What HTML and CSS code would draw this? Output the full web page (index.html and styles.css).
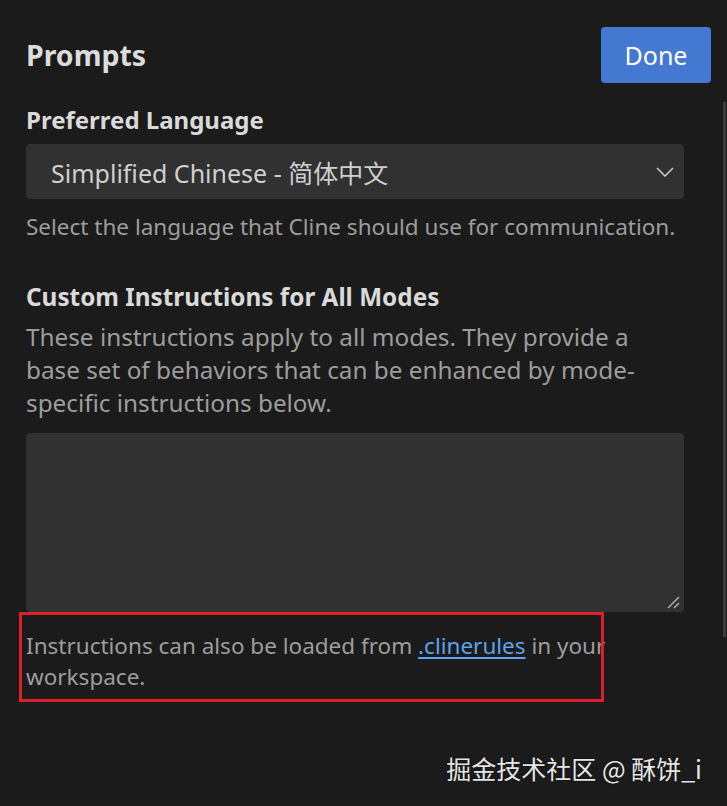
FILE: index.html
```html
<!DOCTYPE html>
<html lang="en">
<head>
<meta charset="utf-8">
<title>Prompts</title>
<link rel="stylesheet" href="styles.css">
</head>
<body>
<div class="page">
  <header class="header">
    <h1 class="title">Prompts</h1>
    <button class="done">Done</button>
  </header>

  <section class="section">
    <h2 class="label">Preferred Language</h2>
    <div class="select">
      <span class="select-text">Simplified Chinese - 简体中文</span>
      <svg class="chevron" width="18" height="10" viewBox="0 0 18 10"><polyline points="1,1 9,9 17,1" fill="none" stroke="#c8c8c8" stroke-width="1.6"/></svg>
    </div>
    <p class="desc">Select the language that Cline should use for communication.</p>
  </section>

  <section class="section">
    <h2 class="label label-custom">Custom Instructions for All Modes</h2>
    <p class="desc desc-para">These instructions apply to all modes. They provide a<br>base set of behaviors that can be enhanced by mode-<br>specific instructions below.</p>
    <div class="textarea">
      <svg class="grip" width="14" height="14" viewBox="0 0 14 14"><line x1="2" y1="13" x2="13" y2="2" stroke="#a8a8a8" stroke-width="1.6"/><line x1="8" y1="13" x2="13" y2="8" stroke="#a8a8a8" stroke-width="1.6"/></svg>
    </div>
    <div class="note-wrap">
      <p class="note">Instructions can also be loaded from <a class="link" href="#">.clinerules</a> in your workspace.</p>
      <span class="highlight"></span>
    </div>
  </section>
</div>
<div class="scrollbar"></div>
<div class="watermark">掘金技术社区 @ 酥饼_i</div>
</body>
</html>
```

FILE: styles.css
```css
html, body {
  margin: 0;
  padding: 0;
  background: #1b1b1b;
}
body {
  font-family: "Noto Sans", "Noto Sans CJK SC", sans-serif;
  color: #d6d6d6;
  width: 727px;
  height: 806px;
  overflow: hidden;
  position: relative;
}
.page {
  padding: 27px 16px 0 26px;
}
.header {
  display: flex;
  justify-content: space-between;
  align-items: center;
  height: 56px;
}
.title {
  margin: 0;
  font-size: 28.5px;
  font-weight: 700;
  color: #dcdcdc;
}
.done {
  width: 110px;
  height: 56px;
  border: none;
  border-radius: 4px;
  background: #4479d2;
  color: #ffffff;
  font-family: "Noto Sans", sans-serif;
  font-size: 25px;
  padding: 0;
}
.section {
  margin-right: 27px;
}
.label {
  margin: 22px 0 0;
  font-size: 24px;
  line-height: 30px;
  font-weight: 700;
  color: #dadada;
}
.label-custom {
  margin-top: 39px;
  font-size: 24.3px;
}
.select {
  margin-top: 9px;
  height: 55px;
  background: #313131;
  border-radius: 4px;
  display: flex;
  align-items: center;
  justify-content: space-between;
  padding: 0 10px 0 25px;
}
.select-text {
  font-size: 25px;
  color: #cfcfcf;
}
.chevron {
  margin-top: 1px;
}
.desc {
  margin: 11px 0 0;
  font-size: 22.5px;
  line-height: 33px;
  color: #9d9d9d;
  white-space: nowrap;
}
.desc-para {
  margin-top: 8px;
  font-size: 24.3px;
}
.textarea {
  position: relative;
  margin-top: 14px;
  height: 179px;
  background: #313131;
  border-radius: 4px;
}
.grip {
  position: absolute;
  right: 4px;
  bottom: 3px;
}
.note-wrap {
  position: relative;
}
.note {
  margin: 0;
  padding-top: 18px;
  font-size: 22.5px;
  line-height: 31px;
  color: #9d9d9d;
}
.link {
  color: #5ea2ec;
  text-decoration: underline;
  text-underline-offset: 3px;
}
.highlight {
  position: absolute;
  left: -7px;
  top: 0;
  width: 579px;
  height: 84px;
  border: 3px solid #dd1f28;
}
.scrollbar {
  position: absolute;
  right: 1px;
  top: 102px;
  width: 3px;
  height: 535px;
  background: #3c3c3c;
}
.watermark {
  position: absolute;
  right: 25px;
  top: 752px;
  font-family: "Noto Sans CJK SC", sans-serif;
  font-size: 25px;
  line-height: 32px;
  color: #e6e6e6;
  text-shadow: 0 0 2px rgba(0,0,0,0.6);
}
```
